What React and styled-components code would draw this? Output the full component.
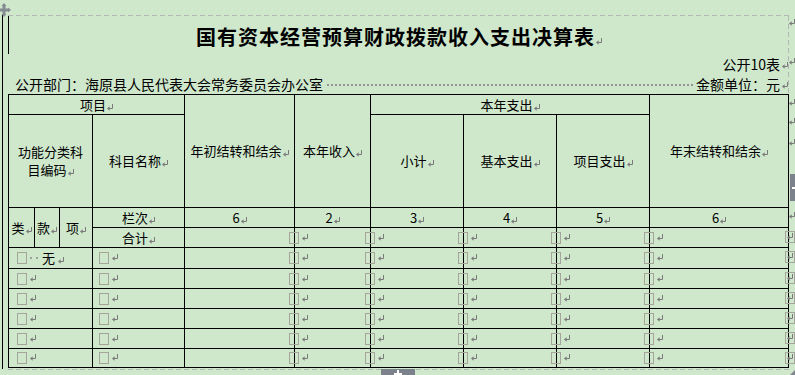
import React from 'react';
import styled, { createGlobalStyle } from 'styled-components';

const BG = '#cfe8cc';
const FONT = '"Noto Sans CJK SC", "Noto Sans", "DejaVu Sans", sans-serif';

const Global = createGlobalStyle`
  html, body { margin: 0; padding: 0; background: ${BG}; }
  body { font-family: ${FONT}; color: #000; }
`;

const Screen = styled.div`
  position: relative;
  width: 795px;
  height: 375px;
  overflow: hidden;
  background: ${BG};
  padding-top: 15px;
  box-sizing: border-box;
`;

const Doc = styled.div`
  margin-left: 2px;
  border-left: 1px solid #000;
  padding-left: 5px;
  height: 354px;
`;

const Frame = styled.div`
  width: 781px;
  display: flex;
  flex-direction: column;
`;

const DashRule = styled.div`
  height: 1px;
  margin-top: ${p => p.$mt || 0}px;
  background: repeating-linear-gradient(to right, #b4b8b4 0 5px, transparent 5px 8px);
`;

const Head = styled.div`
  display: flex;
  flex-direction: column;
  background: repeating-linear-gradient(to bottom, #b4b8b4 0 5px, transparent 5px 8px) right top / 1px 100% no-repeat;
`;

const TitleRow = styled.div`
  height: 38px;
  box-sizing: border-box;
  border-left: 1px solid #000;
  padding-top: 4px;
  display: flex;
  align-items: center;
  justify-content: center;
  font-size: 20px;
  line-height: 24px;
  font-weight: 700;
  letter-spacing: 1px;
`;

const MetaRow = styled.div`
  height: 20px;
  display: flex;
  align-items: center;
  justify-content: ${p => p.$end ? 'flex-end' : 'flex-start'};
  padding: 0 1px 0 ${p => p.$end ? 0 : 7}px;
  font-size: 14px;
  line-height: 18px;
  white-space: nowrap;
`;

const Leader = styled.div`
  flex: 1;
  align-self: center;
  height: 2px;
  margin: 0 2px 0 4px;
  background: repeating-linear-gradient(to right, #939393 0 2px, transparent 2px 4px);
  transform: translateY(1px);
`;

const Grid = styled.div`
  display: grid;
  grid-template-columns: 25px 24px 32px 91px 109px 75px 92px 92px 92px 138px;
  grid-template-rows: 19px 92px 19px 19px 20px 19px 19px 19px 19px 18px;
  gap: 1px;
  padding: 1px;
  background: #000;
  width: max-content;
`;

const Cell = styled.div`
  grid-column: ${p => p.$c};
  grid-row: ${p => p.$r};
  position: relative;
  background: ${BG};
  display: flex;
  align-items: center;
  justify-content: ${p => p.$start ? 'flex-start' : 'center'};
  font-size: 13px;
  line-height: 18px;
  white-space: nowrap;
  text-align: center;
`;

const Txt = styled.span`
  display: inline-flex;
  align-items: center;
`;

const Box = styled.span`
  display: inline-block;
  flex: none;
  box-sizing: border-box;
  width: 10px;
  height: 12px;
  border: 1px solid #a6a59b;
  margin-left: ${p => p.$ml || 0}px;
`;

const EndBox = styled.span`
  position: absolute;
  right: -7px;
  top: 3px;
  box-sizing: border-box;
  width: 10px;
  height: 12px;
  border: 1px solid #a6a59b;
  display: flex;
  align-items: flex-end;
  justify-content: center;
  padding-bottom: 2px;
`;

const Dot = styled.span`
  display: inline-block;
  width: 2px;
  height: 2px;
  background: #a0a0a0;
  margin-left: ${p => p.$ml || 0}px;
`;

const NoneText = styled.span`
  margin-left: 4px;
`;

const RetSvg = styled.svg`
  display: inline-block;
  flex: none;
  width: 6px;
  height: 7px;
  margin-left: ${p => p.$ml ?? 1}px;
  align-self: flex-end;
  margin-bottom: ${p => p.$mb ?? 3}px;
`;

const Ret = ({ ml, mb }) => (
  <RetSvg viewBox="0 0 6 7" $ml={ml} $mb={mb}>
    <path d="M5.5 0 V4.5 H2" stroke="#7a7a7a" strokeWidth="1" fill="none" />
    <path d="M0 4.5 L2.6 2.2 V6.8 Z" fill="#7a7a7a" />
  </RetSvg>
);

const RightMark = styled.div`
  position: absolute;
  left: 789px;
  top: ${p => p.$top}px;
  display: flex;
`;

const MoveHandle = styled.svg`
  position: absolute;
  left: 0;
  top: 1px;
  width: 12px;
  height: 16px;
`;

const AddTab = styled.div`
  position: absolute;
  background: #7b828b;
  display: flex;
  align-items: center;
  justify-content: center;
  ${p => p.$bottom
    ? `left: 381px; top: 369px; width: 34px; height: 10px; align-items: flex-start;`
    : `left: 790px; top: 174px; width: 10px; height: 27px; justify-content: flex-start;`}
`;

const Plus = styled.svg`
  width: 8px;
  height: 8px;
  margin: ${p => p.$m || 0};
`;

const Corner = styled.div`
  position: absolute;
  left: 790px;
  top: 370px;
  width: 0;
  height: 0;
  border-left: 5px solid transparent;
  border-bottom: 5px solid #80868e;
`;

const DataCell = ({ c, r, shift = -6, end, children }) => (
  <Cell $c={c} $r={r} $start>
    <Txt>
      <Box $ml={shift} />
      {children}
      <Ret ml={3} mb={3} />
    </Txt>
    {end && (
      <EndBox>
        <Ret ml={0} mb={0} />
      </EndBox>
    )}
  </Cell>
);

const T = ({ children }) => (
  <Txt>
    {children}
    <Ret />
  </Txt>
);

const valueCols = [6, 7, 8, 9, 10];

const BoxRow = ({ r }) => (
  <>
    <Cell $c="5" $r={r} />
    {valueCols.map(c => (
      <DataCell key={c} c={String(c)} r={r} end={c === 10} />
    ))}
  </>
);

const PlusIcon = ({ m }) => (
  <Plus viewBox="0 0 8 8" $m={m}>
    <path d="M3 0 H5 V3 H8 V5 H5 V8 H3 V5 H0 V3 H3 Z" fill="#fff" />
  </Plus>
);

export default function App() {
  const dataRows = [5, 6, 7, 8, 9, 10];
  return (
    <>
      <Global />
      <Screen>
        <Doc>
          <Frame>
            <DashRule />
            <Head>
              <TitleRow>
                <Txt>国有资本经营预算财政拨款收入支出决算表<Ret mb={4} /></Txt>
              </TitleRow>
              <MetaRow $end>
                <Txt>公开10表<Ret ml={2} mb={4} /></Txt>
              </MetaRow>
              <MetaRow>
                <span>公开部门：海原县人民代表大会常务委员会办公室</span>
                <Leader />
                <Txt>金额单位：元<Ret ml={2} mb={4} /></Txt>
              </MetaRow>
            </Head>
            <Grid>
              <Cell $c="1 / 5" $r="1"><T>项目</T></Cell>
              <Cell $c="5" $r="1 / 3"><T>年初结转和结余</T></Cell>
              <Cell $c="6" $r="1 / 3"><T>本年收入</T></Cell>
              <Cell $c="7 / 10" $r="1"><T>本年支出</T></Cell>
              <Cell $c="10" $r="1 / 3"><T>年末结转和结余</T></Cell>

              <Cell $c="1 / 4" $r="2">
                <div>功能分类科<br /><Txt>目编码<Ret /></Txt></div>
              </Cell>
              <Cell $c="4" $r="2"><T>科目名称</T></Cell>
              <Cell $c="7" $r="2"><T>小计</T></Cell>
              <Cell $c="8" $r="2"><T>基本支出</T></Cell>
              <Cell $c="9" $r="2"><T>项目支出</T></Cell>

              <Cell $c="1" $r="3 / 5"><T>类</T></Cell>
              <Cell $c="2" $r="3 / 5"><T>款</T></Cell>
              <Cell $c="3" $r="3 / 5"><T>项</T></Cell>
              <Cell $c="4" $r="3"><T>栏次</T></Cell>
              <Cell $c="5" $r="3"><T>6</T></Cell>
              <Cell $c="6" $r="3"><T>2</T></Cell>
              <Cell $c="7" $r="3"><T>3</T></Cell>
              <Cell $c="8" $r="3"><T>4</T></Cell>
              <Cell $c="9" $r="3"><T>5</T></Cell>
              <Cell $c="10" $r="3"><T>6</T></Cell>

              <Cell $c="4" $r="4"><T>合计</T></Cell>
              <BoxRow r="4" />

              {dataRows.map(r => (
                <React.Fragment key={r}>
                  <DataCell c="1 / 4" r={String(r)} shift={8}>
                    {r === 5 && (
                      <>
                        <Dot $ml={3} />
                        <Dot $ml={4} />
                        <NoneText>无</NoneText>
                      </>
                    )}
                  </DataCell>
                  <DataCell c="4" r={String(r)} shift={6} />
                  <BoxRow r={String(r)} />
                </React.Fragment>
              ))}
            </Grid>
            <DashRule $mt={1} />
          </Frame>
        </Doc>

        <MoveHandle viewBox="0 0 12 16">
          <path d="M4 2 L1.5 5 H6.5 Z" fill="#858b92" />
          <path d="M4 16 L1.5 13 H6.5 Z" fill="#858b92" />
          <path d="M11 9 L8 6.5 V11.5 Z" fill="#858b92" />
          <path d="M-3 9 L0 6.5 V11.5 Z" fill="#858b92" />
          <rect x="2.5" y="5" width="3" height="8" fill="#858b92" />
          <rect x="0" y="7.5" width="8" height="3" fill="#858b92" />
        </MoveHandle>

        <RightMark $top={19}><Ret ml={0} mb={0} /></RightMark>
        <RightMark $top={58}><Ret ml={0} mb={0} /></RightMark>
        <RightMark $top={99}><Ret ml={0} mb={0} /></RightMark>
        <RightMark $top={118}><Ret ml={0} mb={0} /></RightMark>
        <RightMark $top={139}><Ret ml={0} mb={0} /></RightMark>
        <RightMark $top={212}><Ret ml={0} mb={0} /></RightMark>

        <AddTab>
          <PlusIcon m="0 0 0 2px" />
        </AddTab>
        <AddTab $bottom>
          <PlusIcon m="1px 0 0 0" />
        </AddTab>
        <Corner />
      </Screen>
    </>
  );
}
